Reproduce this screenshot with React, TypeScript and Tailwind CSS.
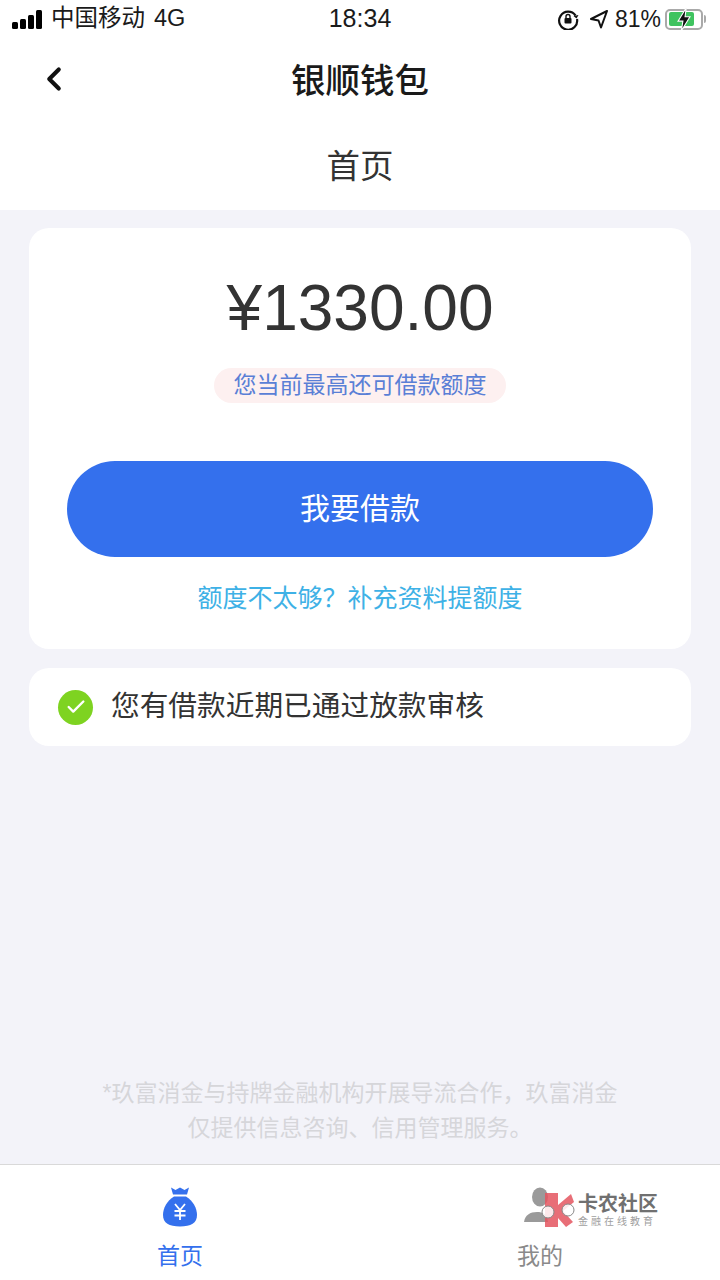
import { ChevronLeft, Check } from "lucide-react";

const cjk = "font-['Liberation_Sans','Noto_Sans_CJK_SC',sans-serif]";

function StatusBar() {
  return (
    <div className="relative flex h-[38px] items-center justify-between pl-[12px] pr-[14px] text-[23px] text-[#1a1a1a]">
      <div className="flex items-center">
        <div className="flex items-end gap-[2px]">
          <span className="h-[7px] w-[6px] rounded-[1.5px] bg-black" />
          <span className="h-[10px] w-[6px] rounded-[1.5px] bg-black" />
          <span className="h-[14px] w-[6px] rounded-[1.5px] bg-black" />
          <span className="h-[19px] w-[6px] rounded-[1.5px] bg-black" />
        </div>
        <span className="ml-[9px] text-[23.5px]">中国移动</span>
        <span className="ml-[9px] text-[23.5px]">4G</span>
      </div>
      <div className="absolute left-0 right-0 text-center text-[25px]">18:34</div>
      <div className="relative flex items-center">
        <svg className="mr-[1px]" width="22" height="22" viewBox="0 0 22 22" fill="none" stroke="#111" strokeWidth="2.2">
          <path d="M18.5 7.5A9 9 0 1 0 20 11" />
          <path d="M16.5 8l3 2.5 2-3.5z" fill="#111" stroke="none" />
          <rect x="7.5" y="10" width="7" height="5.5" rx="1" fill="#111" stroke="none" />
          <path d="M9 10V8.5a2 2 0 0 1 4 0V10" strokeWidth="1.4" />
        </svg>
        <svg className="ml-[10px]" width="18" height="20" viewBox="0 0 18 20" fill="none" stroke="#111" strokeWidth="2" strokeLinejoin="round">
          <path d="M17 2L1 10l7.5 1.5L11 18.500z" />
        </svg>
        <span className="ml-[7px]">81%</span>
        <div className="ml-[4px] flex items-center">
          <div className="relative flex h-[21px] w-[38px] items-center rounded-[5px] border-2 border-[#a9a9a9] p-[1.5px]">
            <div className="h-full w-[81%] rounded-[2px] bg-[#3fc35f]" />
            <svg className="absolute left-[8px] top-[-4px]" width="18" height="25" viewBox="0 0 15 23">
              <path d="M9.5 1L2 13h4.5L5 22l8-13H8.5z" fill="#111" stroke="#fff" strokeWidth="1" />
            </svg>
          </div>
          <span className="ml-[1px] h-[8px] w-[2px] rounded-r-full bg-[#a9a9a9]" />
        </div>
      </div>
    </div>
  );
}

function MoneyBag() {
  return (
    <svg width="36" height="42" viewBox="0 0 36 42">
      <path d="M9 1.5l4.5 2.5L18 1.5 22.5 4 27 1.5 25 8.5H11z" fill="#3470ed" />
      <path d="M12 10.5h12C31 15 35 22 35 29c0 8-6 11.5-17 11.5S1 37 1 29c0-7 4-14 11-18.500z" fill="#3470ed" />
      <path d="M13 18l5 6 5-6M18 24v10M12.500 25h11M12.500 29.500h11" fill="none" stroke="#fff" strokeWidth="1.800" />
    </svg>
  );
}

function Watermark() {
  return (
    <div className="absolute left-[24px] top-0 flex items-start">
      <svg width="54" height="44" viewBox="0 0 54 44">
        <ellipse cx="16" cy="11" rx="8" ry="9.500" fill="#9a9a9a" />
        <path d="M0 36c1-7 6-10 13-10 6 0 10 2 11 10z" fill="#9a9a9a" />
        <path d="M21 7h13v12l13-11 3 8-11 9 10 11-7 5-8-9v9H21z" fill="#e4555f" fillOpacity="0.85" />
        <circle cx="24" cy="26" r="6" fill="#fff" fillOpacity="0.85" stroke="#888" strokeWidth="1" />
        <circle cx="44" cy="24" r="6" fill="#fff" fillOpacity="0.85" stroke="#888" strokeWidth="1" />
      </svg>
      <div className="mt-[7px] flex flex-col items-start">
        <span className="text-[20px] font-bold leading-[22px] text-[#707070]">卡农社区</span>
        <span className="text-[10px] leading-[14px] tracking-[3px] text-[#a0a0a0]">金融在线教育</span>
      </div>
    </div>
  );
}

export default function App() {
  return (
    <div className={`flex h-[1280px] w-[720px] flex-col overflow-hidden bg-[#f3f3f9] ${cjk}`}>
      <div className="bg-white">
        <StatusBar />
        <div className="relative flex h-[84px] items-center justify-center">
          <ChevronLeft className="absolute left-[35px] top-[22px]" size={38} strokeWidth={2.6} color="#111" />
          <span className="mt-[3px] text-[34.5px] font-medium text-[#1a1a1a]">银顺钱包</span>
        </div>
        <div className="flex h-[88px] items-center justify-center pt-[2px] text-[33.5px] text-[#333]">首页</div>
      </div>

      <div className="flex flex-1 flex-col pl-[29px] pt-[18px]">
        <div className="flex h-[421px] w-[662px] flex-col items-center rounded-[20px] bg-white">
          <div className="mt-[42px] text-[64px] leading-[76px] text-[#333]">¥1330.00</div>
          <div className="mt-[22px] flex h-[35px] w-[292px] items-center justify-center rounded-full bg-[#fdf0f0] text-[23px] text-[#5a7fd6]">
            您当前最高还可借款额度
          </div>
          <button className="mt-[58px] flex h-[96px] w-[586px] items-center justify-center rounded-full bg-[#3470ed] pb-[2px] text-[30px] text-white">
            我要借款
          </button>
          <div className="mt-[23px] text-[25px] leading-[36px] text-[#3eb1e6]">额度不太够？补充资料提额度</div>
        </div>

        <div className="mt-[19px] flex h-[78px] w-[662px] items-center rounded-[20px] bg-white pl-[29px]">
          <div className="flex h-[35px] w-[35px] items-center justify-center rounded-full bg-[#7ed321]">
            <Check size={22} strokeWidth={2.6} color="#fff" />
          </div>
          <span className="ml-[18px] text-[28.700px] text-[#333]">您有借款近期已通过放款审核</span>
        </div>

        <div className="mt-auto mb-[18px] w-[662px] text-center text-[23px] leading-[35px] text-[#d6d6da]">
          <p>*玖富消金与持牌金融机构开展导流合作，玖富消金</p>
          <p>仅提供信息咨询、信用管理服务。</p>
        </div>
      </div>

      <div className="flex h-[116px] border-t border-[#d9d9d9] bg-white">
        <div className="flex w-1/2 flex-col items-center pt-[21px]">
          <MoneyBag />
          <span className="mt-[10px] text-[23px] leading-[36px] text-[#3470ed]">首页</span>
        </div>
        <div className="flex w-1/2 flex-col items-center pt-[21px]">
          <div className="relative h-[42px] w-full">
            <div className="absolute left-[140px] top-0 h-[42px] w-[160px]">
              <Watermark />
            </div>
          </div>
          <span className="mt-[10px] text-[23px] leading-[36px] text-[#8a8a8a]">我的</span>
        </div>
      </div>
    </div>
  );
}
